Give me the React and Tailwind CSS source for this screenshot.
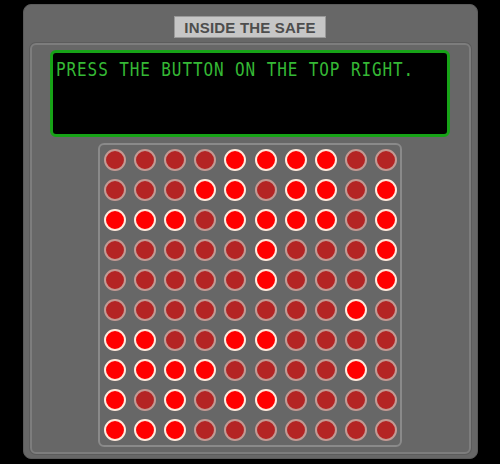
import React from "react";

// LED matrix state, one string per row (1 = lit)
const ROWS = [
  "0000111100",
  "0001101101",
  "1110111101",
  "0000010001",
  "0000010001",
  "0000000010",
  "1100110000",
  "1111000010",
  "1010110000",
  "1110000000",
];

function Led({ on }) {
  return on ? (
    <div className="w-[22px] h-[22px] rounded-full bg-[#ff0000] border-2 border-[#ffe9dc]" />
  ) : (
    <div className="w-[22px] h-[22px] rounded-full bg-[#b42424] border-2 border-[#c39a94]" />
  );
}

export default function App() {
  return (
    <div className="w-[500px] h-[464px] bg-black pt-[4px]">
      <div className="mx-auto w-[455px] h-[455px] rounded-[8px] bg-[#676767] border border-[#5a5a5a] flex flex-col items-center pt-[11px]">
        <div className="w-[152px] h-[22px] bg-[#c6c6c6] border border-[#9a9a9a] flex items-center justify-center">
          <span className="font-['Liberation_Sans',Arial,sans-serif] font-bold text-[15px] leading-none text-[#4d4d4d] tracking-[0.2px]">
            INSIDE THE SAFE
          </span>
        </div>
        <div className="mt-[5px] w-[441px] h-[411px] rounded-[6px] border-2 border-[#7d7d7d] shadow-[0_0_0_1px_#5c5c5c] bg-[#676767] flex flex-col items-center pt-[5px]">
          <div className="w-[400px] h-[87px] bg-black border-[3px] border-[#17a317] rounded-[6px] px-[3px] pt-[6px]">
            <div className="font-['DejaVu_Sans_Mono',monospace] text-[16px] leading-[18px] tracking-[0.9px] text-[#35b835] origin-top-left scale-y-[1.2] whitespace-nowrap">
              PRESS THE BUTTON ON THE TOP RIGHT.
            </div>
          </div>
          <div className="mt-[6px] w-[304px] h-[304px] rounded-[6px] border-2 border-[#8a8a8a] bg-[#676767] p-[3px]">
            <div className="grid grid-cols-10 gap-x-[8px] gap-y-[8px] pl-[1px] pt-[1px]">
              {ROWS.map((row, r) =>
                row.split("").map((c, i) => <Led key={`${r}-${i}`} on={c === "1"} />)
              )}
            </div>
          </div>
        </div>
      </div>
    </div>
  );
}
